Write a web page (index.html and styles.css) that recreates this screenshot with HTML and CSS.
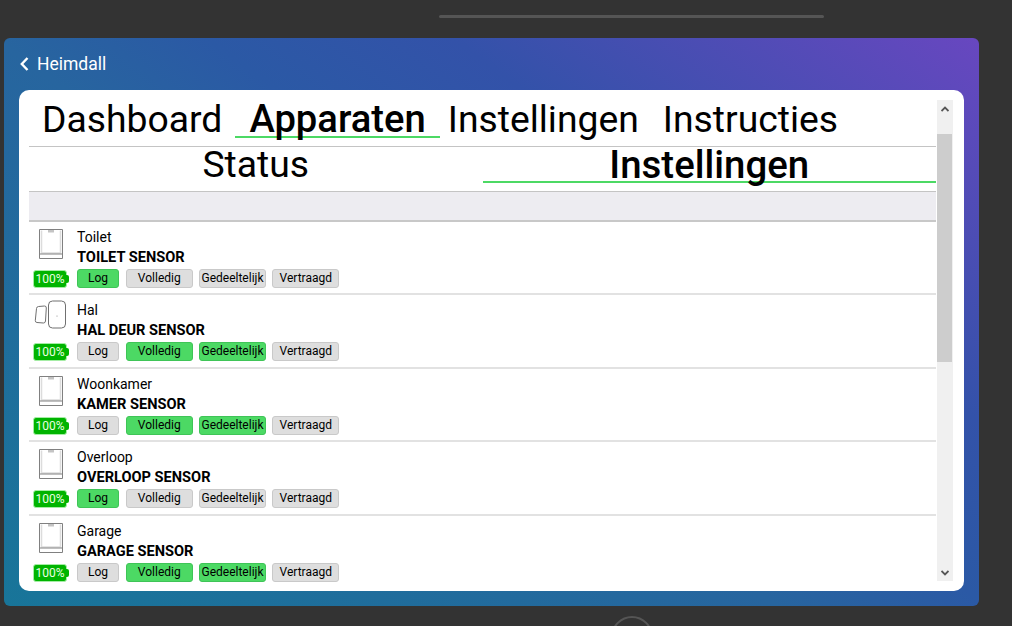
FILE: index.html
```html
<!DOCTYPE html>
<html lang="nl">
  <head>
    <meta charset="UTF-8" />
    <title>Heimdall</title>
    <link rel="stylesheet" href="styles.css">
  </head>

  <body>
    <svg class="none">
      <symbol id="icon-sensor" viewBox="0 0 24 30">
        <path d="M.5.5h23v29H.5z" fill="#fff" stroke="#808080" />
        <path d="M2.500 1.500v22.500h19V1.500" fill="none" stroke="#dcdcdc" stroke-width="1.500" />
        <path d="M.5 25h23" fill="none" stroke="#808080" />
        <path d="M9 1h6v2.500H9z" fill="#c4c4c4" />
      </symbol>
      <symbol id="icon-door" viewBox="0 0 34 32">
        <rect x="14.500" y="1" width="17" height="27" rx="4" fill="#fff" stroke="#707070" />
        <path d="M4.500 6.500l6-.5q2 0 1.800 2L11.500 21q-.2 2-2 2l-6.500-.5q-2-.3-1.700-2L2.500 8.500q.3-2 2-2z" fill="#fff" stroke="#707070" />
        <circle cx="23" cy="16" r=".6" fill="#888" />
      </symbol>
    </svg>

    <div class="speaker"></div>
    <div class="panel">
      <header class="top">
        <svg class="back" viewBox="0 0 9 14"><path d="M7.500 1L1.800 7l5.700 6" fill="none" stroke="#fff" stroke-width="2.400" /></svg>
        <span>Heimdall</span>
      </header>
      <main class="card">
        <div class="content">
          <nav class="tabs">
            <a class="tab">Dashboard</a>
            <a class="tab active">Apparaten</a>
            <a class="tab">Instellingen</a>
            <a class="tab">Instructies</a>
          </nav>
          <nav class="subtabs">
            <a class="subtab">Status</a>
            <a class="subtab active">Instellingen</a>
          </nav>
          <div class="strip"></div>

          <div class="row">
            <div class="pic"><svg class="icon"><use href="#icon-sensor" /></svg></div>
            <div class="name">Toilet</div>
            <div class="battery">100%</div>
            <div class="type">TOILET SENSOR</div>
            <div class="btns">
              <span class="btn log on">Log</span><span class="btn">Volledig</span><span class="btn">Gedeeltelijk</span><span class="btn">Vertraagd</span>
            </div>
          </div>
          <div class="row">
            <div class="pic"><svg class="icon door"><use href="#icon-door" /></svg></div>
            <div class="name">Hal</div>
            <div class="battery">100%</div>
            <div class="type">HAL DEUR SENSOR</div>
            <div class="btns">
              <span class="btn log">Log</span><span class="btn on">Volledig</span><span class="btn on">Gedeeltelijk</span><span class="btn">Vertraagd</span>
            </div>
          </div>
          <div class="row">
            <div class="pic"><svg class="icon"><use href="#icon-sensor" /></svg></div>
            <div class="name">Woonkamer</div>
            <div class="battery">100%</div>
            <div class="type">KAMER SENSOR</div>
            <div class="btns">
              <span class="btn log">Log</span><span class="btn on">Volledig</span><span class="btn on">Gedeeltelijk</span><span class="btn">Vertraagd</span>
            </div>
          </div>
          <div class="row">
            <div class="pic"><svg class="icon"><use href="#icon-sensor" /></svg></div>
            <div class="name">Overloop</div>
            <div class="battery">100%</div>
            <div class="type">OVERLOOP SENSOR</div>
            <div class="btns">
              <span class="btn log on">Log</span><span class="btn">Volledig</span><span class="btn">Gedeeltelijk</span><span class="btn">Vertraagd</span>
            </div>
          </div>
          <div class="row last">
            <div class="pic"><svg class="icon"><use href="#icon-sensor" /></svg></div>
            <div class="name">Garage</div>
            <div class="battery">100%</div>
            <div class="type">GARAGE SENSOR</div>
            <div class="btns">
              <span class="btn log">Log</span><span class="btn on">Volledig</span><span class="btn on">Gedeeltelijk</span><span class="btn">Vertraagd</span>
            </div>
          </div>
        </div>

        <div class="scrollbar">
          <svg class="arrow" viewBox="0 0 8 6"><path d="M.5 5L4 1.500 7.500 5" fill="none" stroke="#555" stroke-width="1.800" /></svg>
          <div class="thumb"></div>
          <svg class="arrow down" viewBox="0 0 8 6"><path d="M.5 1L4 4.500 7.500 1" fill="none" stroke="#555" stroke-width="1.800" /></svg>
        </div>
      </main>
    </div>
    <div class="foot"><div class="home"></div></div>
  </body>
</html>
```

FILE: styles.css
```css
* {
  margin: 0;
  padding: 0;
  box-sizing: border-box;
}
body {
  background-color: #333;
  color: #000;
  font-family: Roboto, "Liberation Sans", sans-serif;
  width: 1012px;
  height: 626px;
  overflow: hidden;
}
.none {
  display: none;
}
.speaker {
  width: 385px;
  height: 3px;
  margin: 15px 0 20px 439px;
  border-radius: 2px;
  background-color: #555;
}
.panel {
  margin-left: 4px;
  width: 975px;
  height: 568px;
  padding: 0 15px 15px;
  border-radius: 6px;
  background: linear-gradient(36deg, #187599 0%, #27659f 44%, #2b59a5 56%, #3352a9 70%, #6847c0 100%);
  display: flex;
  flex-direction: column;
}
.top {
  height: 52px;
  flex: none;
  display: flex;
  align-items: center;
  padding-bottom: 1px;
  color: #fff;
  font-size: 17.500px;
}
.back {
  width: 9px;
  height: 14px;
  margin: 0 8px 0 1px;
}
.card {
  flex: 1;
  min-height: 0;
  display: flex;
  padding: 10px 11px 10px 10px;
  border-radius: 10px;
  background-color: #fff;
}
.content {
  flex: 1;
  min-width: 0;
}
.tabs {
  height: 47px;
  padding-left: 13px;
  display: flex;
  align-items: flex-start;
  border-bottom: 1px solid #c4c4c4;
  font-size: 37.300px;
}
.tab {
  line-height: 38px;
  margin-right: 24px;
  white-space: nowrap;
}
.tab.active {
  margin: 0 8px 0 -11px;
  padding: 0 14px;
  font-size: 38.200px;
  font-weight: 500;
  background: linear-gradient(#4cd964, #4cd964) 0 36px / 100% 2px no-repeat;
}
.subtabs {
  height: 45px;
  display: flex;
  align-items: flex-start;
  border-bottom: 1px solid #c4c4c4;
  font-size: 37.300px;
}
.subtab {
  width: 50%;
  line-height: 35px;
  padding-bottom: 2px;
  text-align: center;
}
.subtab.active {
  font-size: 38.400px;
  font-weight: 500;
  background: linear-gradient(#4cd964, #4cd964) 0 34px / 100% 2px no-repeat;
}
.strip {
  height: 29.500px;
  background-color: #edecf1;
  border-bottom: 2px solid #c8c8c8;
}
.row {
  height: 73.500px;
  padding: 5.400px 0 0 3px;
  display: grid;
  grid-template-columns: 45px 1fr;
  grid-template-rows: 21px 19px 21px;
  border-bottom: 2px solid #e2e2e2;
}
.row.last {
  height: 65px;
  border-bottom: 0;
  grid-template-rows: 21px 19px 20px;
}
.pic {
  grid-row: 1 / 3;
  padding: 2px 0 0 7px;
}
.icon {
  display: block;
  width: 24px;
  height: 30px;
}
.icon.door {
  width: 34px;
  height: 32px;
  margin: -2px 0 0 -5px;
}
.name {
  font-size: 14px;
  line-height: 21px;
}
.type {
  grid-row: 2;
  grid-column: 2;
  font-size: 14.600px;
  font-weight: bold;
  line-height: 19px;
}
.battery {
  grid-row: 3;
  grid-column: 1;
  justify-self: start;
  position: relative;
  width: 34px;
  height: 18px;
  margin: 3px 0 0 1px;
  border: 1px solid #a5eda5;
  border-radius: 3px;
  background-color: #00b400;
  color: #eaffe0;
  font-size: 12px;
  line-height: 17px;
  text-align: center;
}
.battery::after {
  content: "";
  position: absolute;
  left: 32px;
  top: 4px;
  width: 3px;
  height: 8px;
  background-color: #00b400;
  border-radius: 0 2px 2px 0;
}
.btns {
  grid-row: 3;
  grid-column: 2;
  display: flex;
  gap: 6.250px;
  padding-top: 2px;
}
.btn {
  width: 67px;
  height: 19px;
  border: 1px solid #c9c9c9;
  border-radius: 3px;
  background-color: #dedede;
  font-size: 12px;
  line-height: 17px;
  text-align: center;
  white-space: nowrap;
}
.btn.log {
  width: 42px;
  margin-right: .5px;
}
.btn.on {
  background-color: #4cd964;
  border-color: #3fc457;
}
.scrollbar {
  width: 16px;
  margin-left: 1px;
  display: flex;
  flex-direction: column;
  background-color: #f0f0f0;
}
.arrow {
  width: 8px;
  height: 6px;
  margin: 6px auto 0;
  flex: none;
}
.thumb {
  height: 228px;
  margin-top: 22px;
  margin-right: 1px;
  background-color: #cdcdcd;
}
.arrow.down {
  margin: auto auto 5px;
}
.foot {
  height: 20px;
  padding: 10px 0 0 611px;
  overflow: hidden;
}
.home {
  width: 42px;
  height: 42px;
  border: 2px solid #555;
  border-radius: 50%;
}
```
